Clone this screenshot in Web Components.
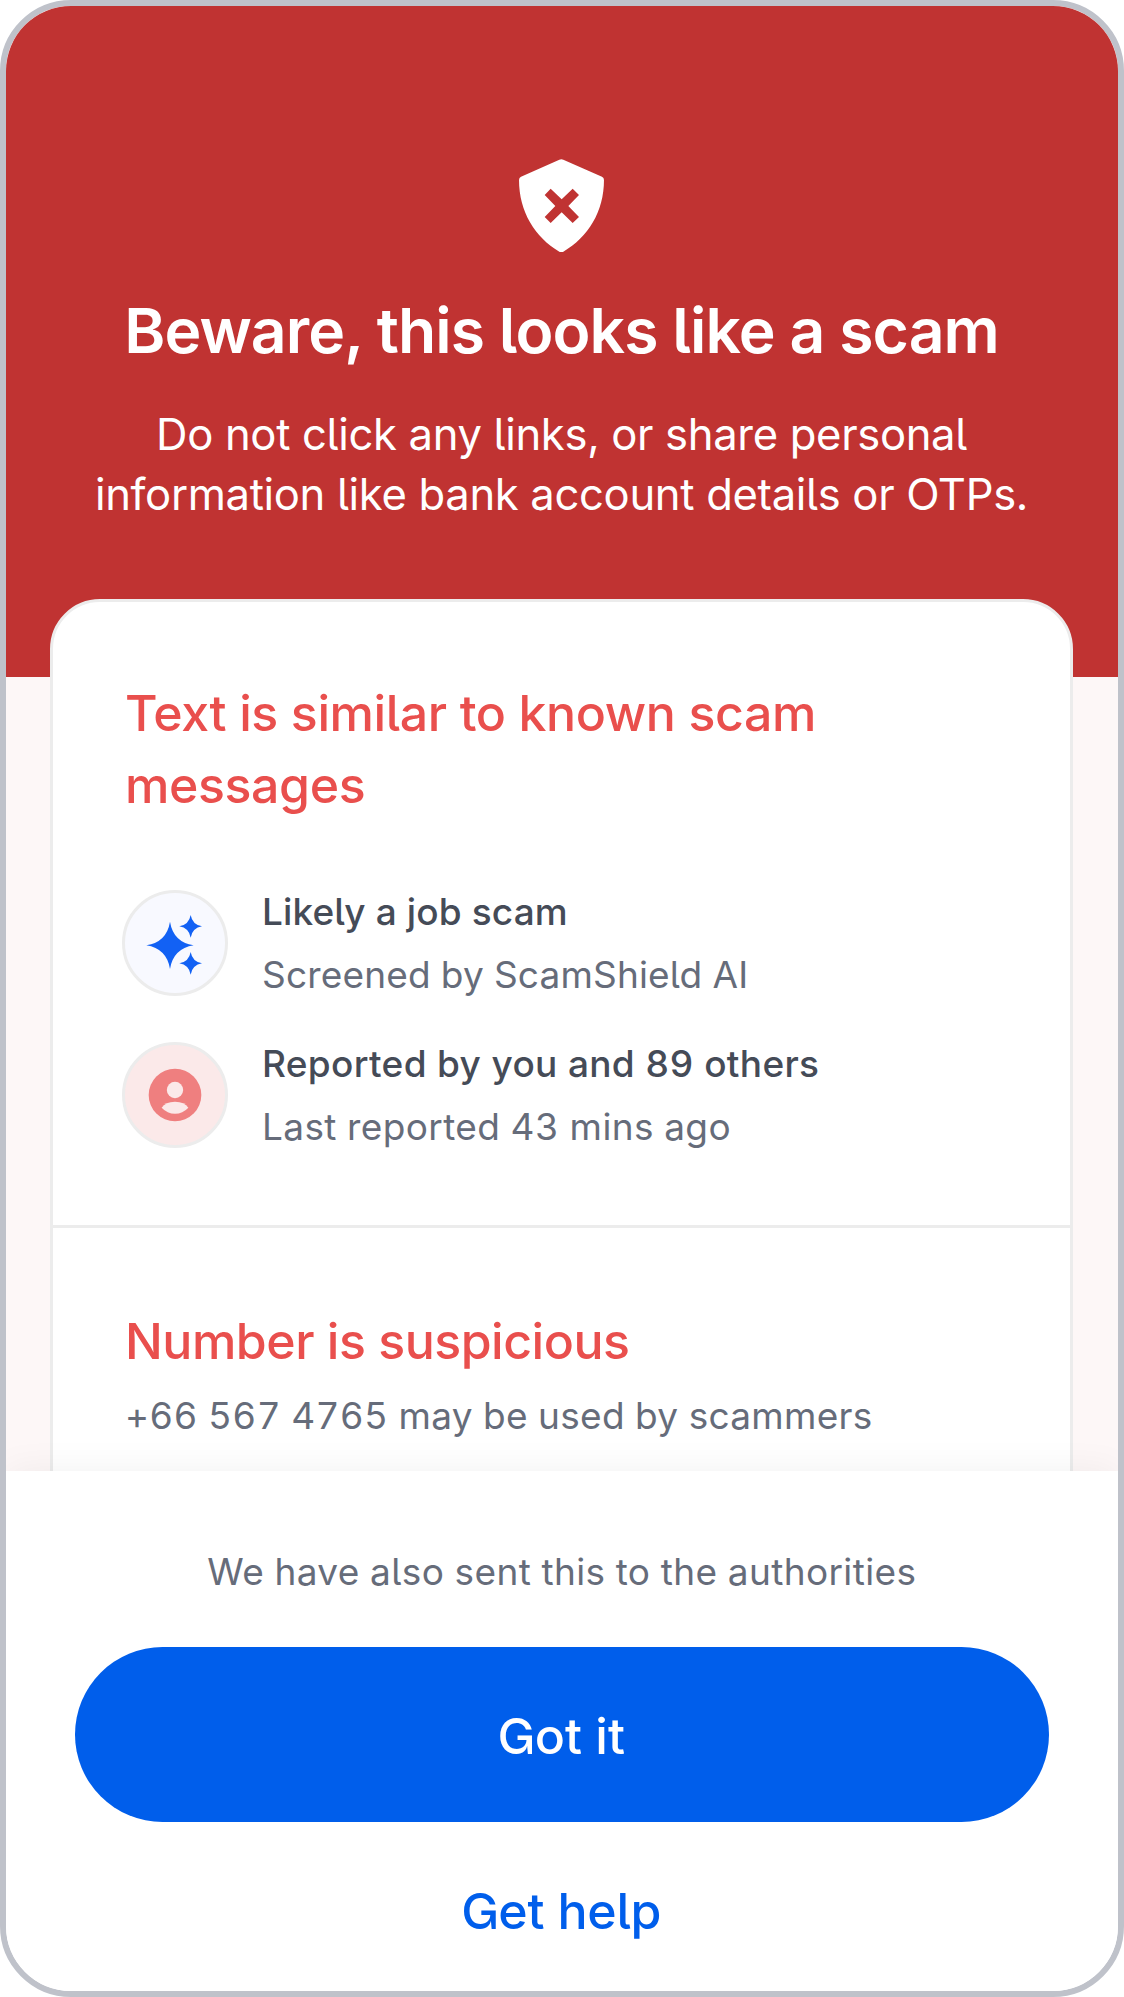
<!DOCTYPE html>
<html lang="en">
<head>
<meta charset="utf-8">
<title>Scam check result</title>
<style>
  body { margin: 0; background: #fff; font-family: Inter, "Liberation Sans", sans-serif; font-feature-settings: "cv05", "cv10"; }
</style>
</head>
<body>
<phone-frame>
  <alert-hero>
    <span slot="title">Beware, this looks like a scam</span>
    <span slot="line1">Do not click any links, or share personal</span>
    <span slot="line2">information like bank account details or OTPs.</span>
  </alert-hero>
  <result-card>
    <card-section>
      <card-heading>Text is similar to known scam<br>messages</card-heading>
      <evidence-list>
        <evidence-item icon="sparkles" style="--title-ls:.12px;--note-ls:.16px">
          <span slot="title">Likely a job scam</span><span slot="note">Screened by ScamShield AI</span>
        </evidence-item>
        <evidence-item icon="person" style="--title-ls:.33px;--note-ls:.37px">
          <span slot="title">Reported by you and 89 others</span><span slot="note">Last reported 43 mins ago</span>
        </evidence-item>
      </evidence-list>
    </card-section>
    <card-section>
      <card-heading style="letter-spacing:-.489px">Number is suspicious</card-heading>
      <card-note>+66 567 4765 may be used by scammers</card-note>
    </card-section>
  </result-card>
  <action-footer slot="footer">
    <span slot="note">We have also sent this to the authorities</span>
    <pill-button>Got it</pill-button>
    <pill-button variant="text">Get help</pill-button>
  </action-footer>
</phone-frame>
<script>
const define = (name, html) => customElements.define(name, class extends HTMLElement {
  constructor() {
    super();
    this.attachShadow({ mode: 'open' }).innerHTML = html;
  }
});

define('phone-frame', `
<style>
  :host { display: flex; flex-direction: column; box-sizing: border-box; width: 1124px; height: 1997px;
    border: 6px solid #bfc2ca; border-radius: 71px; overflow: hidden; background: #fff; }
  .scroll { height: 1465.3px; flex: none; overflow: hidden; background: #fdf7f7; }
</style>
<div class="scroll"><slot></slot></div>
<slot name="footer"></slot>`);

define('alert-hero', `
<style>
  :host { display: flex; flex-direction: column; align-items: center; box-sizing: border-box;
    height: 671.3px; padding: 153px 1px 0 0; background: #c03332; color: #fff; text-align: center; }
  svg { display: block; width: 85px; height: 93.3px; flex: none; }
  h1 { margin: 43px 0 0; font-size: 62.4px; line-height: 72px; font-weight: 600; letter-spacing: -.905px; white-space: nowrap; }
  p { margin: 37.8px 0 0; font-size: 43.6px; line-height: 60px; letter-spacing: -.335px; white-space: nowrap; }
</style>
<svg viewBox="117 87 255 280" aria-hidden="true">
  <path fill="#fff" d="M238 89Q244 86 250 89L366 140Q372 143 372 150C372 245 324 322 250 365Q244 368 238 365C165 322 117 245 117 150Q117 143 123 140Z"/>
  <path fill="#c03332" d="M212 176L194 195L226 228L194 261L212 279L245 247L278 279L297 261L265 228L297 195L278 176L245 208Z"/>
</svg>
<h1><slot name="title"></slot></h1>
<p><slot name="line1"></slot><br><slot name="line2"></slot></p>`);

define('result-card', `
<style>
  :host { display: block; box-sizing: border-box; width: 1023px; margin: -78.3px 0 0 44px; height: 920px;
    border: 3px solid #ececec; border-radius: 50px 50px 0 0; background: #fff; }
  ::slotted(card-section:not(:first-child)) { border-top: 3px solid #ececec; padding-top: 77.6px; }
</style>
<slot></slot>`);

define('card-section', `
<style>:host { display: block; padding: 75px 72px 66px; }</style>
<slot></slot>`);

define('card-heading', `
<style>:host { display: block; font-size: 50px; line-height: 72px; font-weight: 500; letter-spacing: -.39px; color: #e94f4d; white-space: nowrap; }</style>
<slot></slot>`);

define('card-note', `
<style>:host { display: block; margin-top: 6.8px; font-size: 37px; line-height: 63.2px; letter-spacing: .29px; color: #666c7a; white-space: nowrap;
  font-feature-settings: "cv05", "cv10", "tnum"; }</style>
<slot></slot>`);

define('evidence-list', `
<style>:host { display: flex; flex-direction: column; gap: 25.6px; margin: 59.2px 0 0 -3px; }</style>
<slot></slot>`);

const icons = {
  sparkles: `<svg viewBox="66 61 318 318"><circle cx="225" cy="220" r="154.5" fill="#f8f9ff" stroke="#ececec" stroke-width="9"/>
    <g fill="#1261f4"><path d="M210 156Q220 217 281 227Q220 237 210 298Q200 237 139 227Q200 217 210 156Z"/>
    <path d="M272 136Q277 165 306 170Q277 175 272 204Q267 175 238 170Q267 165 272 136Z"/>
    <path d="M272 247Q277 276 306 281Q277 286 272 315Q267 286 238 281Q267 276 272 247Z"/></g></svg>`,
  person: `<svg viewBox="66 517 318 318"><circle cx="225" cy="676" r="154.5" fill="#fbe9e9" stroke="#ececec" stroke-width="9"/>
    <circle cx="225" cy="676" r="79" fill="#ef7f7f"/><circle cx="225" cy="661" r="24.5" fill="#fbe9e9"/>
    <path fill="#fbe9e9" d="M185 714Q196 696 225 696Q254 696 265 714Q248 732 225 732Q202 732 185 714Z"/></svg>`
};
customElements.define('evidence-item', class extends HTMLElement {
  constructor() {
    super();
    this.attachShadow({ mode: 'open' }).innerHTML = `
<style>
  :host { display: flex; align-items: center; gap: 34px; font-size: 37px; line-height: 63.2px; white-space: nowrap;
    font-feature-settings: "cv05", "cv10", "tnum"; }
  svg { display: block; width: 106px; height: 106px; flex: none; }
  .text { display: flex; flex-direction: column; }
  .title { font-weight: 500; color: #454b57; letter-spacing: var(--title-ls); }
  .note { color: #666c7a; letter-spacing: var(--note-ls); }
</style>
${icons[this.getAttribute('icon')]}
<div class="text"><div class="title"><slot name="title"></slot></div><div class="note"><slot name="note"></slot></div></div>`;
  }
});

define('action-footer', `
<style>
  :host { display: flex; flex-direction: column; flex: 1; box-sizing: border-box; padding: 72.3px 69px 0 68.6px; z-index: 1;
    background: #fff; box-shadow: 0 0 36px rgba(0,0,0,.06); }
  .note { font-size: 37px; line-height: 56px; letter-spacing: .38px; color: #666c7a; text-align: center; margin-bottom: 47.3px; white-space: nowrap;
    font-feature-settings: "cv05", "cv10", "tnum"; }
</style>
<div class="note"><slot name="note"></slot></div>
<slot></slot>`);

define('pill-button', `
<style>
  :host { display: block; }
  button { display: flex; align-items: center; justify-content: center; box-sizing: border-box; width: 100%; height: 175px; padding: 3px 1px 0 0;
    border: 0; border-radius: 88px; background: #005eeb; color: #fff; font: 500 50px/72px Inter, "Liberation Sans", sans-serif;
    font-feature-settings: inherit; letter-spacing: 0; }
  :host([variant="text"]) button { background: none; color: #005eeb; letter-spacing: -.2px; }
</style>
<button><slot></slot></button>`);
</script>
</body>
</html>
